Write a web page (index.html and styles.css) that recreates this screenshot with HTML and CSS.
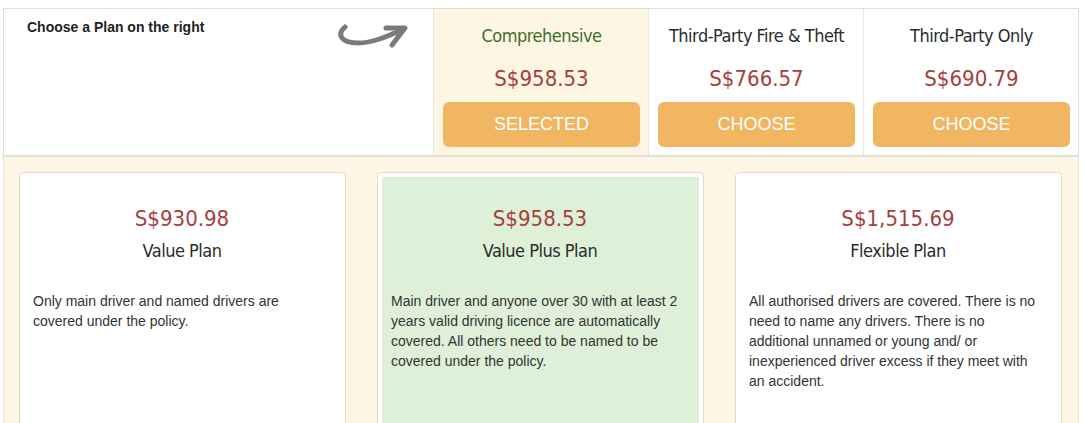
FILE: index.html
```html
<!DOCTYPE html>
<html lang="en">
<head>
    <meta charset="UTF-8">
    <title>Choose a Plan</title>
    <link rel="stylesheet" href="styles.css">
</head>
<body>
    <div class="plans">
        <div class="plan-row">
            <div class="intro">
                <div class="intro-text">Choose a Plan on the right</div>
                <svg class="arrow" width="74" height="30" viewBox="0 0 74 30">
                    <path d="M9 4 C0 12 6 20 22 20 C36 20 50 14 68 6" fill="none" stroke="#7a7a7a" stroke-width="5" stroke-linecap="round"/>
                    <path d="M50 5 L69 5 L56 22" fill="none" stroke="#7a7a7a" stroke-width="5" stroke-linecap="round" stroke-linejoin="round"/>
                </svg>
            </div>
            <div class="cover active">
                <div class="cover-name">Comprehensive</div>
                <div class="cover-price">S$958.53</div>
                <button class="btn-choose">SELECTED</button>
            </div>
            <div class="cover">
                <div class="cover-name">Third-Party Fire &amp; Theft</div>
                <div class="cover-price">S$766.57</div>
                <button class="btn-choose">CHOOSE</button>
            </div>
            <div class="cover">
                <div class="cover-name">Third-Party Only</div>
                <div class="cover-price">S$690.79</div>
                <button class="btn-choose">CHOOSE</button>
            </div>
        </div>

        <div class="options">
            <div class="option">
                <div class="option-inner">
                    <div class="option-price">S$930.98</div>
                    <div class="option-name">Value Plan</div>
                    <p>Only main driver and named drivers are covered under the policy.</p>
                </div>
            </div>
            <div class="option selected">
                <div class="option-inner">
                    <div class="option-price">S$958.53</div>
                    <div class="option-name">Value Plus Plan</div>
                    <p>Main driver and anyone over 30 with at least 2 years valid driving licence are automatically covered. All others need to be named to be covered under the policy.</p>
                </div>
            </div>
            <div class="option">
                <div class="option-inner">
                    <div class="option-price">S$1,515.69</div>
                    <div class="option-name">Flexible Plan</div>
                    <p>All authorised drivers are covered. There is no need to name any drivers. There is no additional unnamed or young and/ or inexperienced driver excess if they meet with an accident.</p>
                </div>
            </div>
        </div>
    </div>
</body>
</html>
```

FILE: styles.css
```css
body {
    margin: 0;
    background: #ffffff;
    font-family: "Liberation Sans", Arial, sans-serif;
    font-size: 14px;
    color: #333333;
}
.plans {
    margin: 8px 6px 0 3px;
}
.plan-row {
    display: flex;
    border: 1px solid #dddddd;
    border-bottom: 2px solid #e3e0d6;
    height: 146px;
}
.intro {
    width: 429px;
    display: flex;
    justify-content: space-between;
    align-items: flex-start;
    padding: 10px 23px 0 23px;
    box-sizing: border-box;
}
.intro-text {
    font-weight: bold;
    font-size: 14px;
    color: #222222;
}
.arrow {
    margin-top: 4px;
}
.cover {
    flex: 1;
    border-left: 1px solid #e6e6e6;
    text-align: center;
    padding: 0 8px 0 9px;
    display: flex;
    flex-direction: column;
    align-items: stretch;
}
.cover.active {
    background: #fcf6e3;
}
.cover-name {
    font-family: "DejaVu Sans Condensed", "DejaVu Sans", sans-serif;
    font-size: 18px;
    letter-spacing: -0.5px;
    color: #2b2b2b;
    margin-top: 16px;
    height: 24px;
}
.cover.active .cover-name {
    color: #3c6e2e;
}
.cover-price {
    font-family: "DejaVu Sans Condensed", "DejaVu Sans", sans-serif;
    font-size: 22px;
    color: #a5403d;
    margin-top: 17px;
    height: 26px;
    line-height: 26px;
}
.btn-choose {
    margin-top: 10px;
    height: 45px;
    border: none;
    border-radius: 6px;
    background: #f0b661;
    color: #ffffff;
    font-family: "Liberation Sans", Arial, sans-serif;
    font-size: 18px;
}
.options {
    display: grid;
    grid-template-columns: repeat(3, 1fr);
    gap: 31px;
    background: #fdf6e4;
    border-left: 1px solid #e8e4d6;
    border-right: 1px solid #e8e4d6;
    padding: 15px 16px 0 15px;
    height: 300px;
}
.option {
    background: #ffffff;
    border: 1px solid #e2dccb;
    border-radius: 4px;
    min-height: 280px;
}
.option-inner {
    padding: 30px 14px 0 13px;
    height: 100%;
    box-sizing: border-box;
}
.option.selected {
    padding: 4px;
}
.option.selected .option-inner {
    background: #dff0d8;
    padding: 26px 10px 0 9px;
}
.option-price {
    font-family: "DejaVu Sans Condensed", "DejaVu Sans", sans-serif;
    font-size: 22px;
    color: #a5403d;
    text-align: center;
    line-height: 32px;
}
.option-name {
    font-family: "DejaVu Sans Condensed", "DejaVu Sans", sans-serif;
    font-size: 18px;
    letter-spacing: -0.5px;
    color: #2b2b2b;
    text-align: center;
    line-height: 24px;
    margin-top: 4px;
}
.option p {
    margin: 28px 0 0 0;
    line-height: 20px;
    color: #333333;
}
```
